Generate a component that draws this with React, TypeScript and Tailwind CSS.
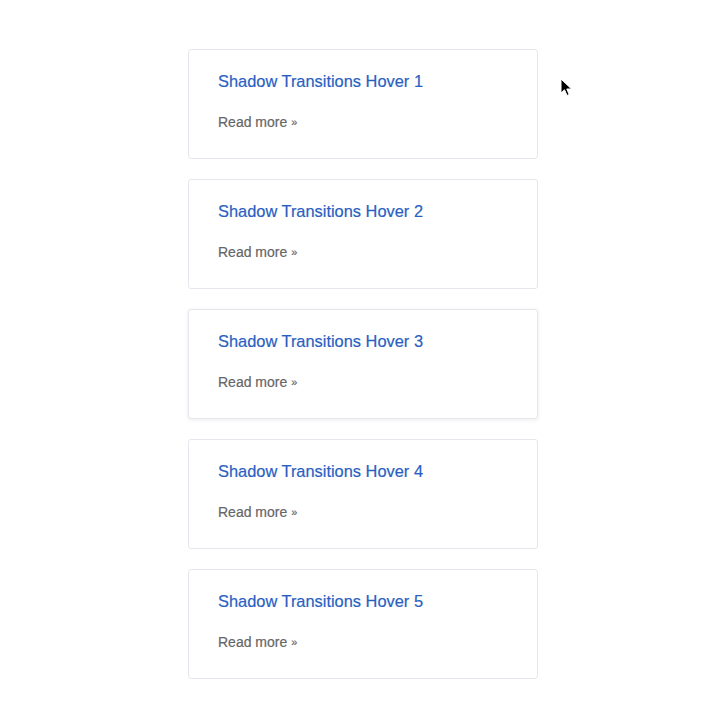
import React from "react";

const items = [1, 2, 3, 4, 5];

export default function App() {
  return (
    <div className="relative min-h-[720px] w-[708px] bg-white" style={{ fontFamily: '"Liberation Sans", Arial, sans-serif' }}>
      <div className="flex flex-col gap-[20px] pl-[188px] pt-[49px]">
        {items.map((n) => (
          <div
            key={n}
            className={
              "flex h-[110px] w-[350px] flex-col rounded-[3px] border border-[#e6e7ec] bg-white px-[29px] pt-[19px] " +
              (n === 3 ? "shadow-[0_1px_4px_rgba(0,0,0,0.08)]" : "")
            }
          >
            <div className="text-[16.4px] leading-[24px] text-[#2a5fc2] [-webkit-text-stroke:0.2px_#2a5fc2]">Shadow Transitions Hover {n}</div>
            <div className="mt-[19px] text-[14px] leading-[20px] text-[#666666] [-webkit-text-stroke:0.2px_#666666]">
              Read more <span className="relative -top-[1px] text-[11px]">»</span>
            </div>
          </div>
        ))}
      </div>
      <svg className="absolute left-[560px] top-[78px]" width="14" height="20" viewBox="0 0 14 20">
        <path d="M1 1 L1 15 L4.5 11.8 L7 17.5 L9.2 16.5 L6.8 11 L11.5 11 Z" fill="#000" stroke="#fff" strokeWidth="1" strokeLinejoin="round" />
      </svg>
    </div>
  );
}
